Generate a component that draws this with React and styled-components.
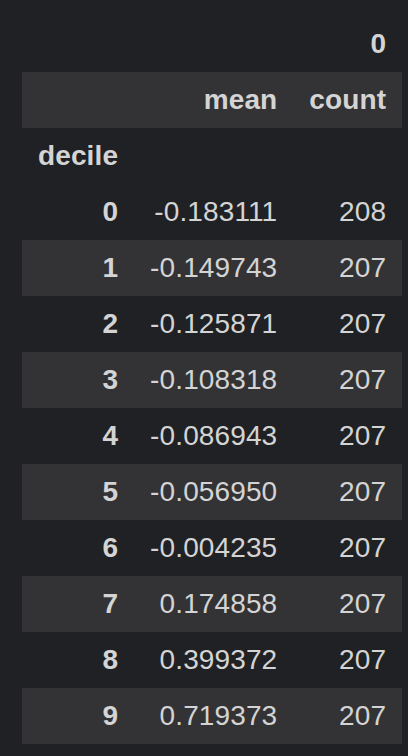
import React from "react";
import styled, { createGlobalStyle } from "styled-components";

const Global = createGlobalStyle`
  html, body {
    margin: 0;
    background: #202124;
  }
`;

const Wrap = styled.div`
  padding: 16px 0 0 22px;
  background: #202124;
  min-height: 740px;
  font-family: "Liberation Sans", Arial, sans-serif;
`;

const Table = styled.table`
  border-collapse: collapse;
  border-spacing: 0;
  font-size: 28px;
  letter-spacing: 0.12px;
  color: #d4d4d4;
`;

const Row = styled.tr`
  height: 56px;
  background: ${(p) => (p.$striped ? "#333335" : "transparent")};
`;

const Th = styled.th`
  padding: 0 16px;
  line-height: 56px;
  font-weight: bold;
  text-align: ${(p) => (p.$left ? "left" : "right")};
  white-space: nowrap;
`;

const Td = styled.td`
  padding: 0 16px;
  line-height: 56px;
  text-align: right;
  white-space: nowrap;
`;

const rows = [
  ["0", "-0.183111", "208"],
  ["1", "-0.149743", "207"],
  ["2", "-0.125871", "207"],
  ["3", "-0.108318", "207"],
  ["4", "-0.086943", "207"],
  ["5", "-0.056950", "207"],
  ["6", "-0.004235", "207"],
  ["7", "0.174858", "207"],
  ["8", "0.399372", "207"],
  ["9", "0.719373", "207"],
];

export default function App() {
  return (
    <Wrap>
      <Global />
      <Table>
        <thead>
          <Row>
            <Th></Th>
            <Th colSpan={2}>0</Th>
          </Row>
          <Row $striped>
            <Th></Th>
            <Th>mean</Th>
            <Th>count</Th>
          </Row>
          <Row>
            <Th $left>decile</Th>
            <Th></Th>
            <Th></Th>
          </Row>
        </thead>
        <tbody>
          {rows.map(([idx, mean, count], i) => (
            <Row key={idx} $striped={i % 2 === 1}>
              <Th>{idx}</Th>
              <Td>{mean}</Td>
              <Td>{count}</Td>
            </Row>
          ))}
        </tbody>
      </Table>
    </Wrap>
  );
}
